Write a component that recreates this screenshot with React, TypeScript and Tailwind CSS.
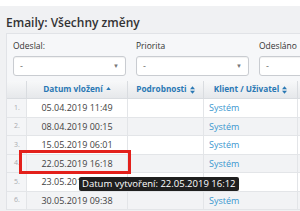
import React from 'react';

const rows = [
  { n: '1.', date: '05.04.2019 11:49' },
  { n: '2.', date: '08.04.2019 00:15' },
  { n: '3.', date: '15.05.2019 06:01' },
  { n: '4.', date: '22.05.2019 16:18' },
  { n: '5.', date: '23.05.2019 09:02' },
  { n: '6.', date: '30.05.2019 09:38' },
];

const heights = ['h-[19px]', 'h-[18px]', 'h-[19px]', 'h-[18px]', 'h-[19px]', 'h-[18px]'];

function Filter({ label, caret }: { label: string; caret?: boolean }) {
  return (
    <div className="w-[113px] shrink-0">
      <div className="h-[14px] text-[8.5px] leading-[14px] text-[#333]">{label}</div>
      <div className="mt-[3px] h-[20px] bg-white border border-[#c9ccd1] rounded-[3px] flex items-center justify-between px-[6px] shadow-[inset_0_1px_1px_rgba(0,0,0,0.06)]">
        <span className="text-[9px] text-[#666]">-</span>
        {caret && <span className="text-[6px] text-[#777]">▼</span>}
      </div>
    </div>
  );
}

function Sort() {
  return (
    <svg width="5" height="8" viewBox="0 0 6 9" className="inline-block ml-[3px]">
      <path d="M3 0 L6 3.5 H0 Z M3 9 L6 5.5 H0 Z" fill="#2a78b4" />
    </svg>
  );
}

const head =
  'h-[18px] bg-gradient-to-b from-[#f7f8f9] to-[#e6e8eb] border-b border-r border-[#d9dce0] flex items-center justify-center text-[8.25px] font-bold text-[#2a78b4] whitespace-nowrap';

export default function App() {
  return (
    <div
      className="relative w-[300px] h-[211px] overflow-hidden bg-[#f0f1f3]"
      style={{ fontFamily: '"Open Sans", "Liberation Sans", sans-serif' }}
    >
      <div className="h-[6px] bg-white" />
      <h1 className="h-[27px] pl-[6px] pt-[9px] text-[12px] leading-[16px] font-semibold text-[#333]">
        Emaily: Všechny změny
      </h1>

      <div className="ml-[6px] w-[320px] bg-[#f6f7f9] border-l border-t border-[#e1e3e7]">
        <div className="flex gap-[10px] pl-[6px] pt-[5px]">
          <Filter label="Odeslal:" caret />
          <Filter label="Priorita" caret />
          <Filter label="Odesláno" />
        </div>

        <div className="mt-[5px] grid grid-cols-[20px_101px_76px_94px_40px]">
          <div className={head} />
          <div className={head}>
            Datum vložení
            <svg width="5" height="3" viewBox="0 0 6 4" className="ml-[3px] -mt-[3px]">
              <path d="M3 0 L6 4 H0 Z" fill="#2a78b4" />
            </svg>
          </div>
          <div className={head}>
            Podrobnosti
            <Sort />
          </div>
          <div className={head}>
            Klient / Uživatel
            <Sort />
          </div>
          <div className="h-[18px] bg-gradient-to-b from-[#f7f8f9] to-[#e6e8eb] border-b border-[#d9dce0]" />

          {rows.map((r, i) => {
            const bg = i % 2 === 1 ? 'bg-[#f2f3f5]' : 'bg-white';
            const h = heights[i];
            return (
              <React.Fragment key={r.n}>
                <div className={`${h} bg-[#f4f5f7] border-b border-r border-[#e3e5e8] flex items-center pl-[7px] text-[7px] text-[#a8abb0]`}>
                  {r.n}
                </div>
                <div className={`${h} ${bg} border-b border-r border-[#e3e5e8] flex items-center justify-center text-[9px] text-[#3f3f3f]`}>
                  {r.date}
                </div>
                <div className={`${h} ${bg} border-b border-r border-[#e3e5e8]`} />
                <div className={`${h} ${bg} border-b border-r border-[#e3e5e8] flex items-center pl-[5px] text-[9px] text-[#3a97cf]`}>
                  Systém
                </div>
                <div className={`${h} ${bg} border-b border-[#e3e5e8]`} />
              </React.Fragment>
            );
          })}
        </div>
      </div>

      <div className="absolute left-[19px] top-[150px] w-[112px] h-[24px] border-[3px] border-[#e3201b]" />

      <div className="absolute left-[79px] top-[177px] h-[14px] px-[3px] bg-[#1f1f1f] rounded-[2px] text-[9.5px] leading-[14px] text-white whitespace-nowrap">
        Datum vytvoření: 22.05.2019 16:12
      </div>
    </div>
  );
}
